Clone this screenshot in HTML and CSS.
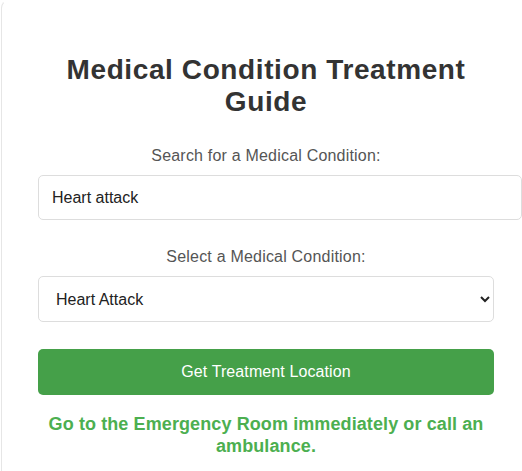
FILE: index.html
```html
<!DOCTYPE html>
<html lang="en">
<head>
<meta charset="utf-8">
<title>Medical Condition Treatment Guide</title>
<link rel="stylesheet" href="styles.css">
</head>
<body>
<div class="card">
  <h1 class="title">Medical Condition Treatment Guide</h1>
  <label class="label" for="search">Search for a Medical Condition:</label>
  <input class="search" id="search" type="text" value="Heart attack">
  <label class="label" for="condition">Select a Medical Condition:</label>
  <select class="select" id="condition">
    <option>Heart Attack</option>
    <option>Stroke</option>
    <option>Broken Bone</option>
  </select>
  <button class="button" type="button">Get Treatment Location</button>
  <p class="result">Go to the Emergency Room immediately or call an ambulance.</p>
</div>
</body>
</html>
```
FILE: styles.css
```css
html, body {
  margin: 0;
  padding: 0;
  background: #ffffff;
  overflow: hidden;
}
body {
  font-family: "Liberation Sans", Arial, sans-serif;
  padding-left: 1px;
}
.card {
  width: 456px;
  padding: 36px;
  border: 1px solid #e6e6e6;
  border-top-color: transparent;
  border-radius: 8px;
  background: #fff;
}
.title {
  margin: 17px 0 29px;
  font-size: 28px;
  letter-spacing: 0.6px;
  font-weight: bold;
  color: #333333;
  text-align: center;
}
.label {
  display: block;
  margin-bottom: 10px;
  font-size: 16px;
  letter-spacing: 0.2px;
  color: #555555;
  text-align: center;
}
.search {
  display: block;
  box-sizing: border-box;
  width: 484px;
  height: 45px;
  margin: 0 0 28px;
  padding: 0 13px;
  font-family: "Liberation Sans", Arial, sans-serif;
  font-size: 16px;
  color: #222;
  border: 1px solid #dddddd;
  border-radius: 5px;
  background: #fff;
}
.select {
  display: block;
  width: 100%;
  box-sizing: border-box;
  height: 46px;
  margin: 0 0 27px;
  padding: 0 10px 0 13px;
  font-family: "Liberation Sans", Arial, sans-serif;
  font-size: 16px;
  color: #222;
  border: 1px solid #dddddd;
  border-radius: 5px;
  background: #fff;
}
.button {
  display: block;
  width: 100%;
  box-sizing: border-box;
  height: 46px;
  padding: 0;
  font-family: "Liberation Sans", Arial, sans-serif;
  font-size: 16px;
  letter-spacing: 0.1px;
  color: #ffffff;
  background: #45a049;
  border: none;
  border-radius: 5px;
}
.result {
  margin: 19px 0 0;
  font-size: 18px;
  line-height: 21.7px;
  letter-spacing: 0.1px;
  font-weight: bold;
  color: #4caf50;
  text-align: center;
}
```
